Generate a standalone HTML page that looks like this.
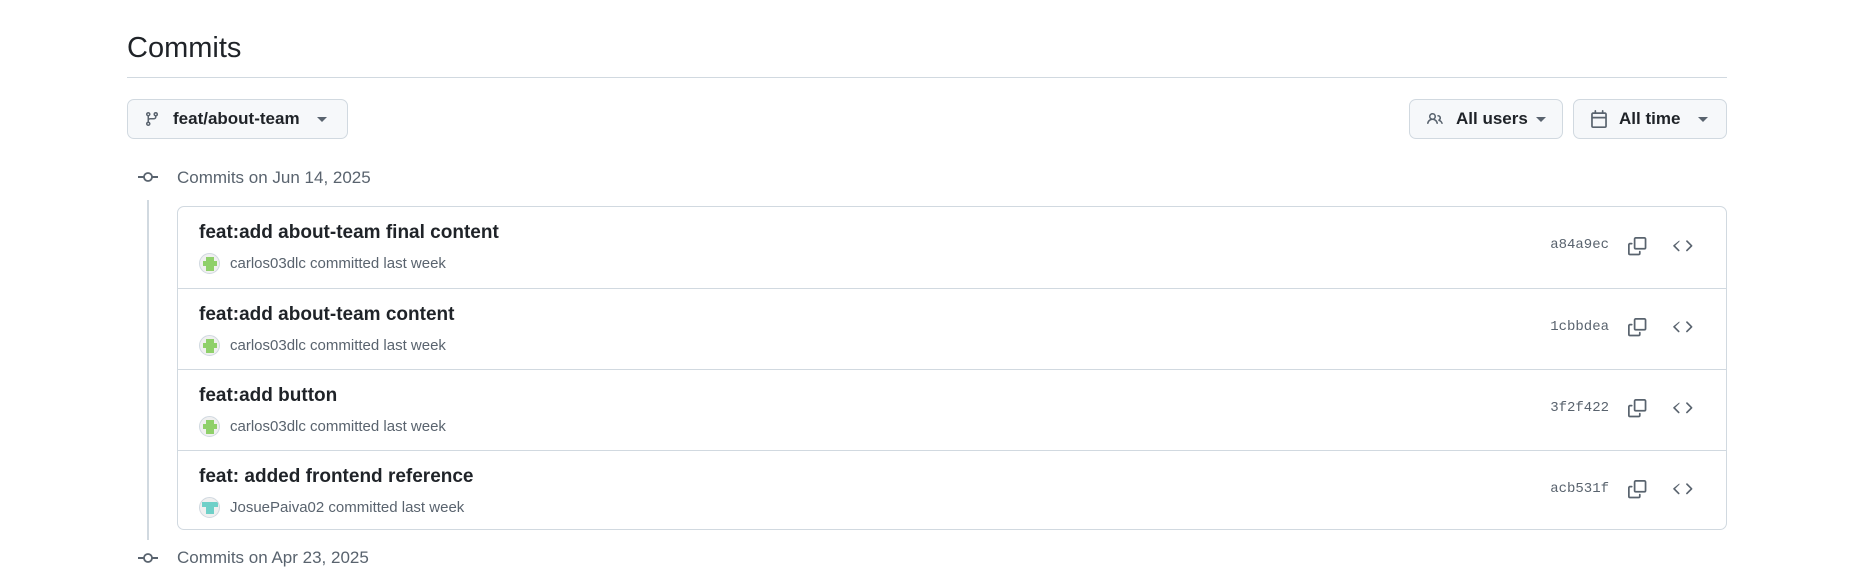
<!DOCTYPE html>
<html><head><meta charset="utf-8"><style>
*{box-sizing:border-box;margin:0;padding:0}
body{width:1867px;height:572px;background:#fff;font-family:"Liberation Sans",sans-serif;color:#1f2328;position:relative;overflow:hidden}
.abs{position:absolute}
h1{position:absolute;left:127px;top:30px;font-size:29px;font-weight:400;line-height:36px}
.hr{left:127px;top:77px;width:1600px;height:1px;background:#d1d9e0}
.btn{position:absolute;top:99px;height:40px;background:#f6f8fa;border:1px solid #d1d9e0;border-radius:7px;display:flex;align-items:center;font-size:17px;font-weight:600}
.btn svg{fill:#59636e}
.caret{width:0;height:0;border-left:5px solid transparent;border-right:5px solid transparent;border-top:5px solid #59636e;position:absolute}
.date{position:absolute;left:177px;font-size:17px;color:#59636e;line-height:20px}
.vline{left:147px;top:200px;width:2px;height:340px;background:#d1d9e0}
.card{left:177px;top:206px;width:1550px;height:324px;border:1px solid #d1d9e0;border-radius:7px}
.row{position:absolute;left:0;width:100%;height:81px;border-top:1px solid #d1d9e0}
.row:first-child{border-top:none}
.t{position:absolute;left:21px;top:14px;font-size:19px;font-weight:700;line-height:24px}
.m{position:absolute;left:21px;top:46px;font-size:15px;color:#59636e;display:flex;align-items:center;line-height:21px}
.av{width:21px;height:21px;border-radius:50%;border:1px solid #d1d9e0;background:#f0f0f0;margin-right:10px;position:relative;overflow:hidden}
.h{position:absolute;right:117px;top:30px;font-family:"Liberation Mono",monospace;font-size:14px;color:#59636e}
.ic{position:absolute;top:30px}
</style></head><body>
<h1>Commits</h1>
<div class="abs hr"></div>

<div class="btn" style="left:127px;width:221px">
<svg class="abs" style="left:16px;top:11px" width="16" height="16" viewBox="0 0 16 16"><path d="M9.5 3.25a2.25 2.25 0 1 1 3 2.122V6A2.5 2.5 0 0 1 10 8.5H6a1 1 0 0 0-1 1v1.128a2.251 2.251 0 1 1-1.5 0V5.372a2.25 2.25 0 1 1 1.5 0v1.836A2.493 2.493 0 0 1 6 7h4a1 1 0 0 0 1-1v-.628A2.25 2.25 0 0 1 9.5 3.25Zm-6 0a.75.75 0 1 0 1.5 0 .75.75 0 0 0-1.5 0Zm8.25-.75a.75.75 0 1 0 0 1.5.75.75 0 0 0 0-1.5ZM4.25 12a.75.75 0 1 0 0 1.5.75.75 0 0 0 0-1.5Z"/></svg>
<span class="abs" style="left:45px;top:9px">feat/about-team</span>
<div class="caret" style="left:189px;top:17px"></div>
</div>

<div class="btn" style="left:1409px;width:154px">
<svg class="abs" style="left:16px;top:11px" width="18" height="16" viewBox="0 0 16 16"><path d="M2 5.5a3.5 3.5 0 1 1 5.898 2.549 5.508 5.508 0 0 1 3.034 4.084.75.75 0 1 1-1.482.235 4 4 0 0 0-7.9 0 .75.75 0 0 1-1.482-.236A5.507 5.507 0 0 1 3.102 8.05 3.493 3.493 0 0 1 2 5.5ZM11 4a3.001 3.001 0 0 1 2.22 5.018 5.01 5.01 0 0 1 2.56 3.012.749.749 0 0 1-.885.954.752.752 0 0 1-.549-.514 3.507 3.507 0 0 0-2.522-2.372.75.75 0 0 1-.574-.73v-.352a.75.75 0 0 1 .416-.672A1.5 1.5 0 0 0 11 5.5.75.75 0 0 1 11 4Zm-5.5-.5a2 2 0 1 0-.001 3.999A2 2 0 0 0 5.5 3.5Z"/></svg>
<span class="abs" style="left:46px;top:9px">All users</span>
<div class="caret" style="left:126px;top:17px"></div>
</div>

<div class="btn" style="left:1573px;width:154px">
<svg class="abs" style="left:16px;top:10px" width="18" height="18" viewBox="0 0 16 16"><path d="M4.75 0a.75.75 0 0 1 .75.75V2h5V.75a.75.75 0 0 1 1.5 0V2h1.25c.966 0 1.75.784 1.75 1.75v10.5A1.75 1.75 0 0 1 13.25 16H2.75A1.75 1.75 0 0 1 1 14.25V3.75C1 2.784 1.784 2 2.75 2H4V.75A.75.75 0 0 1 4.75 0ZM2.5 7.5v6.75c0 .138.112.25.25.25h10.5a.25.25 0 0 0 .25-.25V7.5Zm10.75-4H2.75a.25.25 0 0 0-.25.25V6h11V3.75a.25.25 0 0 0-.25-.25Z"/></svg>
<span class="abs" style="left:45px;top:9px">All time</span>
<div class="caret" style="left:124px;top:17px"></div>
</div>

<svg class="abs" style="left:138px;top:169px" width="20" height="16" viewBox="0 0 20 16"><rect x="0" y="7" width="20" height="2" fill="#59636e"/><circle cx="10" cy="8" r="4" fill="#fff" stroke="#59636e" stroke-width="1.8"/></svg>
<div class="date" style="top:168px">Commits on Jun 14, 2025</div>
<div class="abs vline"></div>

<div class="abs card">
<div class="row" style="top:0">
 <div class="t">feat:add about-team final content</div>
 <div class="m"><div class="av"><div class="abs" style="left:6px;top:3px;width:8px;height:14px;background:#8fd06a"></div><div class="abs" style="left:3px;top:7px;width:14px;height:5px;background:#8fd06a"></div></div>carlos03dlc committed last week</div>
 <div class="h">a84a9ec</div>
</div>
<div class="row" style="top:81px">
 <div class="t">feat:add about-team content</div>
 <div class="m"><div class="av"><div class="abs" style="left:6px;top:3px;width:8px;height:14px;background:#8fd06a"></div><div class="abs" style="left:3px;top:7px;width:14px;height:5px;background:#8fd06a"></div></div>carlos03dlc committed last week</div>
 <div class="h">1cbbdea</div>
</div>
<div class="row" style="top:162px">
 <div class="t">feat:add button</div>
 <div class="m"><div class="av"><div class="abs" style="left:6px;top:3px;width:8px;height:14px;background:#8fd06a"></div><div class="abs" style="left:3px;top:7px;width:14px;height:5px;background:#8fd06a"></div></div>carlos03dlc committed last week</div>
 <div class="h">3f2f422</div>
</div>
<div class="row" style="top:243px">
 <div class="t">feat: added frontend reference</div>
 <div class="m"><div class="av"><div class="abs" style="left:2px;top:4px;width:16px;height:5px;background:#6fd0c8"></div><div class="abs" style="left:6px;top:9px;width:8px;height:7px;background:#6fd0c8"></div></div>JosuePaiva02 committed last week</div>
 <div class="h">acb531f</div>
</div>
</div>

<!-- icons per row -->
<div id="icons"></div>
<svg class="abs" style="left:0;top:0" width="1867" height="572">
<g fill="#59636e">
<g id="r1" transform="translate(1628,237)">
<path d="M0 6.75C0 5.784.784 5 1.75 5h1.5a.75.75 0 0 1 0 1.5h-1.5a.25.25 0 0 0-.25.25v7.5c0 .138.112.25.25.25h7.5a.25.25 0 0 0 .25-.25v-1.5a.75.75 0 0 1 1.5 0v1.5A1.75 1.75 0 0 1 9.25 16h-7.5A1.75 1.75 0 0 1 0 14.25Z" transform="scale(1.15)"/>
<path d="M5 1.75C5 .784 5.784 0 6.75 0h7.5C15.216 0 16 .784 16 1.75v7.5A1.75 1.75 0 0 1 14.25 11h-7.5A1.75 1.75 0 0 1 5 9.25Zm1.75-.25a.25.25 0 0 0-.25.25v7.5c0 .138.112.25.25.25h7.5a.25.25 0 0 0 .25-.25v-7.5a.25.25 0 0 0-.25-.25Z" transform="scale(1.15)"/>
<path d="M11.22 3.22a.75.75 0 0 1 1.06 0l4.25 4.25a.75.75 0 0 1 0 1.06l-4.25 4.25a.749.749 0 0 1-1.275-.326.749.749 0 0 1 .215-.734L14.94 8l-3.72-3.72a.75.75 0 0 1 0-1.06Zm-6.44 0a.75.75 0 0 1 0 1.06L1.06 8l3.72 3.72a.749.749 0 0 1-.326 1.275.749.749 0 0 1-.734-.215L-.53 8.53a.75.75 0 0 1 0-1.06Z" transform="translate(46,0) scale(1.1)"/>
</g>
<use href="#r1" transform="translate(0,81)"/>
<use href="#r1" transform="translate(0,162)"/>
<use href="#r1" transform="translate(0,243)"/>
</g>
</svg>

<svg class="abs" style="left:138px;top:550px" width="20" height="16" viewBox="0 0 20 16"><rect x="0" y="7" width="20" height="2" fill="#59636e"/><circle cx="10" cy="8" r="4" fill="#fff" stroke="#59636e" stroke-width="1.8"/></svg>
<div class="date" style="top:548px">Commits on Apr 23, 2025</div>
</body></html>
